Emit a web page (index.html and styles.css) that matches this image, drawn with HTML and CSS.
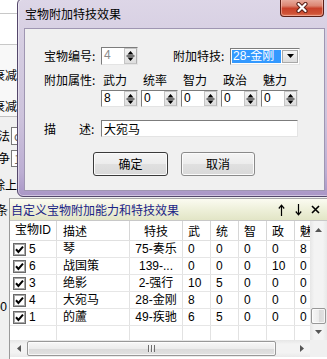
FILE: index.html
```html
<!DOCTYPE html>
<html>
<head>
<meta charset="utf-8">
<link rel="stylesheet" href="styles.css">
</head>
<body>
<div class="desktop">
  <div class="backwin">
    <div class="bw w1"></div>
    <div class="bw w2"></div>
    <div class="bw w3"><span>衰减</span></div>
    <div class="bw w4"><span>衰减</span></div>
    <div class="bw w5"><span>法</span><i class="bwbox">c</i></div>
    <div class="bw w6"><span>争</span><i class="bwbox">1</i></div>
    <div class="bw w7"><span>除上</span></div>
    <div class="bw w8"><span>条</span></div>
    <div class="bw w9"><span>00</span></div>
  </div>

  <div class="panel">
    <div class="caption">
      <span class="cap-title">自定义宝物附加能力和特技效果</span>
      <span class="cap-icons">
        <svg width="7" height="12" viewBox="0 0 7 12"><path d="M3.5 12 V1.5 M0.8 4.5 L3.5 1.2 L6.2 4.5" fill="none" stroke="#000" stroke-width="1.2"/></svg>
        <svg width="7" height="12" viewBox="0 0 7 12"><path d="M3.5 0 V10.5 M0.8 7.5 L3.5 10.8 L6.2 7.5" fill="none" stroke="#000" stroke-width="1.2"/></svg>
        <svg width="9" height="9" viewBox="0 0 9 9"><path d="M1 1 L8 8 M8 1 L1 8" fill="none" stroke="#000" stroke-width="1.6"/></svg>
      </span>
    </div>
    <div class="gridarea">
      <div class="table">
        <div class="tr th">
          <div>宝物ID</div><div class="c2">描述</div><div class="c3">特技</div><div>武</div><div>统</div><div>智</div><div>政</div><div>魅</div>
        </div>
        <div class="tr">
          <div class="c1"><svg class="cb" width="13" height="13" viewBox="0 0 13 13"><rect x="0.5" y="0.5" width="12" height="12" fill="#fff" stroke="#6a6a6a"/><rect x="1.5" y="1.5" width="10" height="10" fill="none" stroke="#a8a8a8"/><path d="M3 6.3 L5.4 8.9 L10 3.6" fill="none" stroke="#000" stroke-width="2"/></svg><span>5</span></div>
          <div class="c2">琴</div><div class="c3">75-奏乐</div><div>0</div><div>0</div><div>0</div><div>0</div><div>8</div>
        </div>
        <div class="tr">
          <div class="c1"><svg class="cb" width="13" height="13" viewBox="0 0 13 13"><rect x="0.5" y="0.5" width="12" height="12" fill="#fff" stroke="#6a6a6a"/><rect x="1.5" y="1.5" width="10" height="10" fill="none" stroke="#a8a8a8"/><path d="M3 6.3 L5.4 8.9 L10 3.6" fill="none" stroke="#000" stroke-width="2"/></svg><span>6</span></div>
          <div class="c2">战国策</div><div class="c3">139-...</div><div>0</div><div>0</div><div>0</div><div>10</div><div>0</div>
        </div>
        <div class="tr">
          <div class="c1"><svg class="cb" width="13" height="13" viewBox="0 0 13 13"><rect x="0.5" y="0.5" width="12" height="12" fill="#fff" stroke="#6a6a6a"/><rect x="1.5" y="1.5" width="10" height="10" fill="none" stroke="#a8a8a8"/><path d="M3 6.3 L5.4 8.9 L10 3.6" fill="none" stroke="#000" stroke-width="2"/></svg><span>3</span></div>
          <div class="c2">绝影</div><div class="c3">2-强行</div><div>10</div><div>5</div><div>0</div><div>0</div><div>0</div>
        </div>
        <div class="tr">
          <div class="c1"><svg class="cb" width="13" height="13" viewBox="0 0 13 13"><rect x="0.5" y="0.5" width="12" height="12" fill="#fff" stroke="#6a6a6a"/><rect x="1.5" y="1.5" width="10" height="10" fill="none" stroke="#a8a8a8"/><path d="M3 6.3 L5.4 8.9 L10 3.6" fill="none" stroke="#000" stroke-width="2"/></svg><span>4</span></div>
          <div class="c2">大宛马</div><div class="c3">28-金刚</div><div>8</div><div>0</div><div>0</div><div>0</div><div>0</div>
        </div>
        <div class="tr">
          <div class="c1"><svg class="cb" width="13" height="13" viewBox="0 0 13 13"><rect x="0.5" y="0.5" width="12" height="12" fill="#fff" stroke="#6a6a6a"/><rect x="1.5" y="1.5" width="10" height="10" fill="none" stroke="#a8a8a8"/><path d="M3 6.3 L5.4 8.9 L10 3.6" fill="none" stroke="#000" stroke-width="2"/></svg><span>1</span></div>
          <div class="c2">的蘆</div><div class="c3">49-疾驰</div><div>6</div><div>5</div><div>0</div><div>0</div><div>0</div>
        </div>
        <div class="tr filler">
          <div></div><div></div><div></div><div></div><div></div><div></div><div></div><div></div>
        </div>
      </div>
      <div class="vscroll">
        <div class="vs-btn"><svg width="7" height="4" viewBox="0 0 7 4"><path d="M0 4 L3.5 0 L7 4Z" fill="#555"/></svg></div>
        <div class="vs-track"></div>
        <div class="vs-thumb"></div>
        <div class="vs-btn dn"><svg width="7" height="4" viewBox="0 0 7 4"><path d="M0 0 L3.5 4 L7 0Z" fill="#555"/></svg></div>
      </div>
      <div class="hscroll">
        <div class="hs-btn"><svg width="4" height="7" viewBox="0 0 4 7"><path d="M4 0 L0 3.5 L4 7Z" fill="#555"/></svg></div>
        <div class="hs-thumb"><span class="grip"></span></div>
        <div class="hs-track"></div>
        <div class="hs-btn"><svg width="4" height="7" viewBox="0 0 4 7"><path d="M0 0 L4 3.5 L0 7Z" fill="#555"/></svg></div>
      </div>
      <div class="corner"></div>
    </div>
  </div>

  <div class="dialog">
    <div class="titlebar">
      <span class="title">宝物附加特技效果</span>
      <span class="close"><svg width="14" height="11" viewBox="0 0 14 11"><path d="M3.5 2 L10.5 9 M10.5 2 L3.5 9" fill="none" stroke="#5a2018" stroke-width="4.2" stroke-linecap="round"/><path d="M3.5 2 L10.5 9 M10.5 2 L3.5 9" fill="none" stroke="#fff" stroke-width="2.2" stroke-linecap="round"/></svg></span>
    </div>
    <div class="client">
      <div class="row r1">
        <span class="lbl">宝物编号:</span>
        <span class="spin disabled"><span class="val">4</span><span class="spinbtn"><svg width="11" height="14" viewBox="0 0 11 14"><path d="M2.5 5.5 L5.5 2 L8.5 5.5Z" fill="#000"/><rect x="1.5" y="6.5" width="8" height="1" fill="#000"/><path d="M2.5 8.5 L5.5 12 L8.5 8.5Z" fill="#000"/></svg></span></span>
        <span class="lbl gap">附加特技:</span>
        <span class="combo"><span class="sel">28-金刚</span><span class="drop"><svg width="7" height="4" viewBox="0 0 7 4"><path d="M0 0 L3.5 4 L7 0Z" fill="#000"/></svg></span></span>
      </div>
      <div class="row r2">
        <span class="lbl">附加属性:</span>
        <span class="attr">武力</span><span class="attr">统率</span><span class="attr">智力</span><span class="attr">政治</span><span class="attr">魅力</span>
      </div>
      <div class="row r3">
        <span class="lbl"></span>
        <span class="spin"><span class="val">8</span><span class="spinbtn"><svg width="11" height="14" viewBox="0 0 11 14"><path d="M2.5 5.5 L5.5 2 L8.5 5.5Z" fill="#000"/><rect x="1.5" y="6.5" width="8" height="1" fill="#000"/><path d="M2.5 8.5 L5.5 12 L8.5 8.5Z" fill="#000"/></svg></span></span>
        <span class="spin"><span class="val">0</span><span class="spinbtn"><svg width="11" height="14" viewBox="0 0 11 14"><path d="M2.5 5.5 L5.5 2 L8.5 5.5Z" fill="#000"/><rect x="1.5" y="6.5" width="8" height="1" fill="#000"/><path d="M2.5 8.5 L5.5 12 L8.5 8.5Z" fill="#000"/></svg></span></span>
        <span class="spin"><span class="val">0</span><span class="spinbtn"><svg width="11" height="14" viewBox="0 0 11 14"><path d="M2.5 5.5 L5.5 2 L8.5 5.5Z" fill="#000"/><rect x="1.5" y="6.5" width="8" height="1" fill="#000"/><path d="M2.5 8.5 L5.5 12 L8.5 8.5Z" fill="#000"/></svg></span></span>
        <span class="spin"><span class="val">0</span><span class="spinbtn"><svg width="11" height="14" viewBox="0 0 11 14"><path d="M2.5 5.5 L5.5 2 L8.5 5.5Z" fill="#000"/><rect x="1.5" y="6.5" width="8" height="1" fill="#000"/><path d="M2.5 8.5 L5.5 12 L8.5 8.5Z" fill="#000"/></svg></span></span>
        <span class="spin"><span class="val">0</span><span class="spinbtn"><svg width="11" height="14" viewBox="0 0 11 14"><path d="M2.5 5.5 L5.5 2 L8.5 5.5Z" fill="#000"/><rect x="1.5" y="6.5" width="8" height="1" fill="#000"/><path d="M2.5 8.5 L5.5 12 L8.5 8.5Z" fill="#000"/></svg></span></span>
      </div>
      <div class="row r4">
        <span class="lbl desc"><span>描</span><span class="shu">述:</span></span>
        <span class="textbox">大宛马</span>
      </div>
      <div class="row r5">
        <span class="btn ok">确定</span>
        <span class="btn cancel">取消</span>
      </div>
    </div>
  </div>
</div>
</body>
</html>
```
FILE: styles.css
```css
* { box-sizing: border-box; margin: 0; padding: 0; }
body {
  margin: 0;
  width: 327px;
  height: 359px;
  overflow: hidden;
  font-family: "Liberation Sans", "Noto Sans CJK SC", sans-serif;
  font-size: 12px;
  color: #000;
}
.desktop {
  position: relative;
  width: 327px;
  height: 359px;
  overflow: hidden;
  background: #f0f0f0;
}

/* background window fragments */
.backwin {
  position: absolute;
  left: -70px;
  top: 0;
  width: 87px;
  height: 359px;
  background: #f0f0f0;
  display: flex;
  flex-direction: column;
  font-family: "Noto Sans CJK SC", sans-serif;
}
.bw { display: flex; justify-content: flex-end; flex: none; line-height: 16px; }
.w1 { height: 14px; background: #fff; border-bottom: 1px solid #c8c8c8; }
.w2 { height: 31px; background: #fff; border-bottom: 1px solid #c8c8c8; }
.w3 { height: 42px; background: #f8f8f8; align-items: flex-end; padding-bottom: 4px; }
.w4 { height: 30px; background: #f8f8f8; padding-top: 11px; border-bottom: 1px solid #c0c0c0; }
.w5 { height: 29px; align-items: flex-end; padding-bottom: 1px; }
.w6 { height: 22px; align-items: flex-end; padding-bottom: 1px; }
.w5 span, .w6 span { padding-bottom: 1px; }
.bwbox {
  display: block;
  width: 30px;
  height: 18px;
  margin-left: 1px;
  margin-right: -24px;
  background: #fff;
  border: 1px solid #7a7a7a;
  border-right: none;
  font-style: normal;
  color: #666;
  padding-left: 2px;
  line-height: 16px;
}
.w6 .bwbox { height: 17px; }
.w7 { height: 27px; align-items: flex-end; padding-bottom: 2px; }
.w8 { height: 30px; align-items: center; padding-right: 9px; }
.w9 { height: 90px; align-items: flex-end; padding-right: 10px; font-family: "Liberation Sans", sans-serif; }

/* docked panel */
.panel {
  position: absolute;
  left: 9px;
  top: 198px;
  width: 318px;
  height: 161px;
  border-left: 1px solid #9a9a9a;
  border-top: 1px solid #a9a9a9;
  background: #fff;
  display: flex;
  flex-direction: column;
}
.caption {
  height: 21px;
  flex: none;
  background: linear-gradient(180deg, #fbfbf1 0%, #eef0da 50%, #e2e5c6 100%);
  display: flex;
  align-items: center;
  padding-left: 1px;
  color: #1b2486;
}
.cap-title { font-family: "Noto Sans CJK SC", sans-serif; line-height: 16px; }
.cap-icons {
  margin-left: auto;
  margin-right: 7px;
  display: flex;
  align-items: center;
  gap: 10px;
}
.cap-icons svg:last-child { margin-left: -1px; }

.gridarea {
  display: grid;
  grid-template-columns: 300px 17px;
  grid-template-rows: 120px 17px;
}
.table {
  overflow: hidden;
  background: #fff;
  border-top: 1px solid #c8c8c8;
}
.tr {
  display: grid;
  grid-template-columns: 47px 73px 53px 28px 28px 28px 28px 28px;
  width: 313px;
  height: 17px;
  border-bottom: 1px solid #e6e6e6;
}
.tr > div {
  border-right: 1px solid #e2e2e2;
  padding-left: 5px;
  line-height: 16px;
  white-space: nowrap;
  overflow: hidden;
}
.tr.th { height: 20px; border-bottom: 1px solid #e0e0e0; }
.tr.th > div { line-height: 19px; border-right-color: #d6d6d6; font-family: "Noto Sans CJK SC", sans-serif; }
.tr.th > div:first-child { font-family: "Liberation Sans", "Noto Sans CJK SC", sans-serif; }
.tr .c2 { padding-left: 6px; }
.tr .c3 { padding-left: 0; text-align: center; }
.tr .c1 { display: flex; align-items: center; padding-left: 3px; }
.tr .c1 span { margin-left: 3px; }
.cb { display: block; flex: none; }
.tr.filler { height: 14px; border-bottom: none; }

.vscroll {
  border-top: 1px solid #c8c8c8;
  background: linear-gradient(90deg, #e6e6e6 0%, #f3f3f3 25%, #f3f3f3 75%, #e9e9e9 100%);
  display: flex;
  flex-direction: column;
}
.vs-btn { height: 18px; flex: none; display: flex; align-items: center; justify-content: center; }
.vs-btn.dn { height: 16px; }
.vs-track { flex: 1; }
.vs-thumb {
  height: 16px;
  flex: none;
  margin: 0 1px 0 1px;
  border: 1px solid #989898;
  border-radius: 2px;
  background: linear-gradient(90deg, #f7f7f7 0%, #ececec 50%, #dadada 51%, #e2e2e2 100%);
  box-shadow: inset 0 0 0 1px rgba(255,255,255,.7);
}
.hscroll {
  display: flex;
  background: linear-gradient(180deg, #e6e6e6 0%, #f3f3f3 25%, #f3f3f3 75%, #e9e9e9 100%);
}
.hs-btn { width: 17px; flex: none; display: flex; align-items: center; justify-content: center; }
.hs-thumb {
  width: 249px;
  flex: none;
  margin: 1px 0;
  border: 1px solid #989898;
  border-radius: 2px;
  background: linear-gradient(180deg, #f7f7f7 0%, #ececec 50%, #dadada 51%, #e2e2e2 100%);
  box-shadow: inset 0 0 0 1px rgba(255,255,255,.7);
  display: flex;
  align-items: center;
  justify-content: center;
}
.grip {
  width: 7px;
  height: 7px;
  background: repeating-linear-gradient(90deg, #6e6e6e 0 1px, #f4f4f4 1px 2px, transparent 2px 3px);
}
.hs-track { flex: 1; }
.corner { background: #f0f0f0; }

/* dialog window */
.dialog {
  position: absolute;
  left: 17px;
  top: -2px;
  width: 315px;
  height: 199px;
  border: 1px solid #54476b;
  border-radius: 6px;
  background: linear-gradient(180deg, #ddd6e7 0%, #d5cde1 25%, #cdc3dc 60%, #bcaed3 88%, #a996c6 100%);
  box-shadow: inset 0 0 0 1px rgba(255,255,255,.45);
  display: flex;
  flex-direction: column;
}
.titlebar { height: 29px; flex: none; display: flex; align-items: flex-start; }
.title {
  padding: 7px 0 0 7px;
  line-height: 16px;
  font-family: "Noto Sans CJK SC", sans-serif;
  color: #000;
}
.close {
  margin-left: auto;
  margin-right: 7px;
  width: 44px;
  height: 18px;
  border: 1px solid #5b1f17;
  border-top: none;
  border-radius: 0 0 4px 4px;
  background: linear-gradient(180deg, #e9b0a3 0%, #dc8572 40%, #c8412a 55%, #cf5236 85%, #e07a5c 100%);
  box-shadow: inset 0 0 0 1px rgba(255,210,200,.5);
  display: flex;
  align-items: center;
  justify-content: center;
}
.client {
  flex: 1;
  margin: 0 6px 5px 6px;
  background: #f0f0f0;
  border: 1px solid #9f96b2;
  padding: 18px 0 0 19px;
  font-family: "Noto Sans CJK SC", sans-serif;
}
.row { display: flex; align-items: center; }
.lbl { width: 57px; flex: none; line-height: 16px; white-space: nowrap; }
.lbl.gap { margin-left: 35px; }
.r1 { height: 18px; }
.r2 { height: 17px; margin-top: 6px; }
.r3 { height: 17px; margin-top: 2px; }
.r4 { height: 17px; margin-top: 13px; }
.r5 { height: 24px; margin-top: 15px; }
.attr { width: 40px; flex: none; padding-left: 2px; line-height: 16px; }

.spin {
  width: 37px;
  height: 18px;
  flex: none;
  display: flex;
  background: #fff;
  border: 1px solid;
  border-color: #7c7c7c #e4e4e4 #e4e4e4 #7c7c7c;
  font-family: "Liberation Sans", sans-serif;
}
.r3 .spin { height: 17px; margin-right: 3px; }
.val { flex: 1; padding-left: 2px; line-height: 15px; }
.disabled .val { color: #8a8a8a; }
.spinbtn {
  width: 13px;
  flex: none;
  display: flex;
  align-items: center;
  justify-content: center;
  background: linear-gradient(180deg, #f2f2f2, #dedede);
  border: 1px solid #c4c4c4;
  border-right-color: #b0b0b0;
}
.spinbtn svg { display: block; }

.combo {
  width: 70px;
  height: 17px;
  flex: none;
  display: flex;
  align-items: stretch;
  background: #fff;
  border: 1px solid;
  border-color: #7c7c7c #e4e4e4 #e4e4e4 #7c7c7c;
  padding: 1px;
}
.sel {
  width: 49px;
  flex: none;
  background: #3399ff;
  color: #fff;
  line-height: 13px;
  padding-left: 1px;
  font-family: "Liberation Sans", "Noto Sans CJK SC", sans-serif;
  white-space: nowrap;
}
.drop {
  margin-left: auto;
  width: 16px;
  flex: none;
  display: flex;
  align-items: center;
  justify-content: center;
  background: linear-gradient(180deg, #f4f4f4, #dcdcdc);
  border: 1px solid #a8a8a8;
}

.desc { display: flex; }
.shu { margin-left: 23px; }
.textbox {
  width: 197px;
  height: 17px;
  flex: none;
  background: #fff;
  border: 1px solid;
  border-color: #7c7c7c #e4e4e4 #e4e4e4 #7c7c7c;
  padding-left: 2px;
  line-height: 15px;
}

.btn {
  height: 24px;
  flex: none;
  border: 1px solid #8a8a8a;
  border-radius: 3px;
  background: linear-gradient(180deg, #f4f4f4 0%, #ececec 50%, #e0e0e0 51%, #d9d9d9 100%);
  box-shadow: inset 0 0 0 1px #fbfbfb;
  display: flex;
  align-items: center;
  justify-content: center;
  line-height: 16px;
}
.ok { width: 75px; margin-left: 49px; border-color: #3a3a3a; }
.cancel { width: 74px; margin-left: 13px; }
```
